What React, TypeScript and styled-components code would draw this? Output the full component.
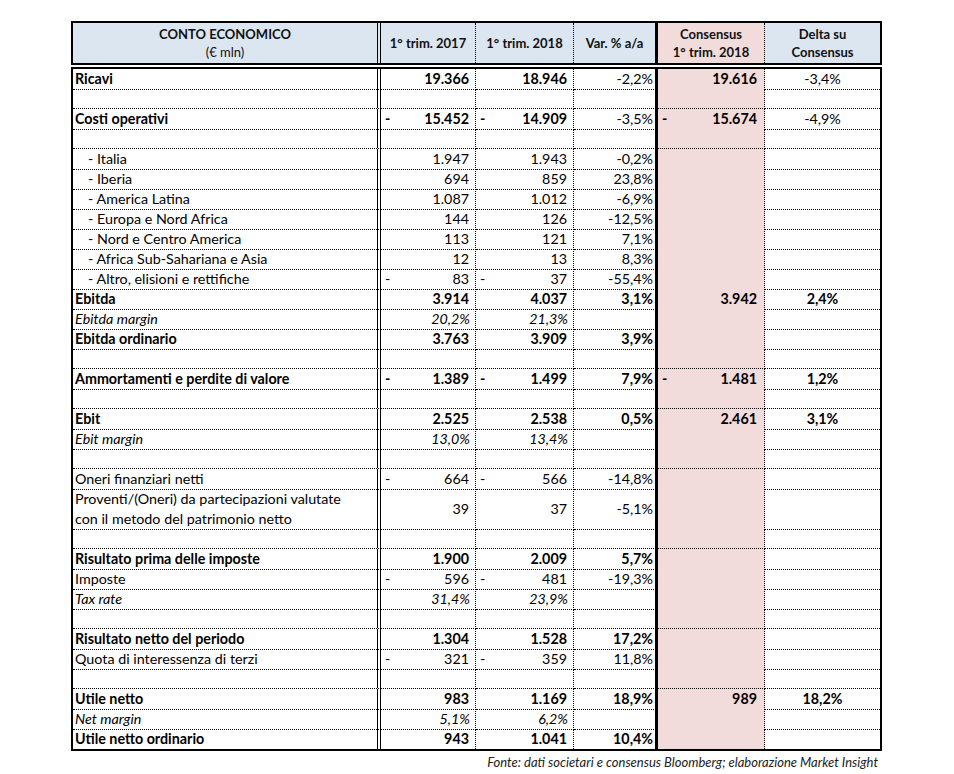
import React from "react";
import styled, { createGlobalStyle, css } from "styled-components";

const GlobalStyle = createGlobalStyle`
  html, body { margin: 0; padding: 0; background: #ffffff; }
  body { font-family: Lato, "Open Sans", Arial, sans-serif; color: #000; }
`;

const COLS = "308px 95px 98px 84px 107px 115px";
const BLUE = "#dce6f1";
const PINK = "#f2dcdb";

type Kind = "bold" | "italic" | "regular" | "indent" | "empty";

interface RowData {
  label?: string[];
  kind: Kind;
  a?: string;
  b?: string;
  v?: string;
  c?: string;
  d?: string;
  vBold?: boolean;
  h?: number;
}

const rows: RowData[] = [
  { label: ["Ricavi"], kind: "bold", a: "19.366", b: "18.946", v: "-2,2%", c: "19.616", d: "-3,4%", vBold: false },
  { kind: "empty" },
  { label: ["Costi operativi"], kind: "bold", a: "-15.452", b: "-14.909", v: "-3,5%", c: "-15.674", d: "-4,9%", vBold: false },
  { kind: "empty" },
  { label: ["- Italia"], kind: "indent", a: "1.947", b: "1.943", v: "-0,2%" },
  { label: ["- Iberia"], kind: "indent", a: "694", b: "859", v: "23,8%" },
  { label: ["- America Latina"], kind: "indent", a: "1.087", b: "1.012", v: "-6,9%" },
  { label: ["- Europa e Nord Africa"], kind: "indent", a: "144", b: "126", v: "-12,5%" },
  { label: ["- Nord e Centro America"], kind: "indent", a: "113", b: "121", v: "7,1%" },
  { label: ["- Africa Sub-Sahariana e Asia"], kind: "indent", a: "12", b: "13", v: "8,3%" },
  { label: ["- Altro, elisioni e rettifiche"], kind: "indent", a: "-83", b: "-37", v: "-55,4%" },
  { label: ["Ebitda"], kind: "bold", a: "3.914", b: "4.037", v: "3,1%", c: "3.942", d: "2,4%" },
  { label: ["Ebitda margin"], kind: "italic", a: "20,2%", b: "21,3%" },
  { label: ["Ebitda ordinario"], kind: "bold", a: "3.763", b: "3.909", v: "3,9%" },
  { kind: "empty" },
  { label: ["Ammortamenti e perdite di valore"], kind: "bold", a: "-1.389", b: "-1.499", v: "7,9%", c: "-1.481", d: "1,2%" },
  { kind: "empty" },
  { label: ["Ebit"], kind: "bold", a: "2.525", b: "2.538", v: "0,5%", c: "2.461", d: "3,1%" },
  { label: ["Ebit margin"], kind: "italic", a: "13,0%", b: "13,4%" },
  { kind: "empty" },
  { label: ["Oneri finanziari netti"], kind: "regular", a: "-664", b: "-566", v: "-14,8%" },
  {
    label: ["Proventi/(Oneri) da partecipazioni valutate", "con il metodo del patrimonio netto"],
    kind: "regular",
    a: "39",
    b: "37",
    v: "-5,1%",
    h: 40,
  },
  { kind: "empty" },
  { label: ["Risultato prima delle imposte"], kind: "bold", a: "1.900", b: "2.009", v: "5,7%" },
  { label: ["Imposte"], kind: "regular", a: "-596", b: "-481", v: "-19,3%" },
  { label: ["Tax rate"], kind: "italic", a: "31,4%", b: "23,9%" },
  { kind: "empty" },
  { label: ["Risultato netto del periodo"], kind: "bold", a: "1.304", b: "1.528", v: "17,2%" },
  { label: ["Quota di interessenza di terzi"], kind: "regular", a: "-321", b: "-359", v: "11,8%" },
  { kind: "empty" },
  { label: ["Utile netto"], kind: "bold", a: "983", b: "1.169", v: "18,9%", c: "989", d: "18,2%" },
  { label: ["Net margin"], kind: "italic", a: "5,1%", b: "6,2%" },
  { label: ["Utile netto ordinario"], kind: "bold", a: "943", b: "1.041", v: "10,4%" },
];

const Page = styled.div`
  padding: 21px 0 0 71px;
`;

const Sheet = styled.div`
  width: 811px;
`;

const HeaderBox = styled.div`
  display: grid;
  grid-template-columns: ${COLS};
  height: 44px;
  box-sizing: border-box;
  border: 2px solid #000;
  background: ${BLUE};
`;

const sepByCol = (col: number) => {
  switch (col) {
    case 0:
      return "border-right: 4px double #000;";
    case 1:
    case 2:
    case 4:
      return "border-right: 1px dotted #000;";
    case 3:
      return "border-right: 3px solid #000;";
    default:
      return "border-right: none;";
  }
};

const HeadCell = styled.div<{ $col: number }>`
  box-sizing: border-box;
  display: flex;
  flex-direction: column;
  align-items: center;
  justify-content: center;
  text-align: center;
  font-size: 13px;
  font-weight: 700;
  line-height: 18px;
  color: #111;
  ${(p) => sepByCol(p.$col)}
  background: ${(p) => (p.$col === 4 ? PINK : "transparent")};
`;

const HeadSub = styled.span`
  font-weight: 400;
`;

const BodyBox = styled.div`
  margin-top: 2px;
  border: 2px solid #000;
`;

const RowGrid = styled.div<{ $h: number }>`
  display: grid;
  grid-template-columns: ${COLS};
  height: ${(p) => p.$h}px;
`;

const cellBase = css<{ $last: boolean }>`
  box-sizing: border-box;
  display: flex;
  align-items: center;
  font-size: 14.3px;
  line-height: 20px;
  white-space: nowrap;
  border-bottom: ${(p) => (p.$last ? "none" : "1px dotted #000")};
`;

const LabelCell = styled.div<{ $last: boolean; $kind: Kind }>`
  ${cellBase}
  ${sepByCol(0)}
  flex-direction: column;
  align-items: flex-start;
  justify-content: center;
  padding-left: ${(p) => (p.$kind === "indent" ? "15px" : "2px")};
  font-weight: ${(p) => (p.$kind === "bold" ? 700 : 400)};
  font-style: ${(p) => (p.$kind === "italic" ? "italic" : "normal")};
`;

const AcctCell = styled.div<{ $last: boolean; $col: number; $bold: boolean; $italic: boolean; $tint?: boolean }>`
  ${cellBase}
  ${(p) => sepByCol(p.$col)}
  justify-content: space-between;
  padding: 0 ${(p) => (p.$italic ? "5px" : p.$col === 4 ? "7px" : "6px")} 0 4px;
  font-weight: ${(p) => (p.$bold ? 700 : 400)};
  font-style: ${(p) => (p.$italic ? "italic" : "normal")};
  background: ${(p) => (p.$tint ? PINK : "transparent")};
`;

const Dash = styled.span``;
const Amount = styled.span`
  margin-left: auto;
`;

const VarCell = styled.div<{ $last: boolean; $bold: boolean }>`
  ${cellBase}
  ${sepByCol(3)}
  justify-content: flex-end;
  padding-right: 2px;
  font-weight: ${(p) => (p.$bold ? 700 : 400)};
`;

const DeltaCell = styled.div<{ $last: boolean; $bold: boolean }>`
  ${cellBase}
  ${sepByCol(5)}
  justify-content: center;
  font-weight: ${(p) => (p.$bold ? 700 : 400)};
`;

const Source = styled.p`
  margin: 3px 0 0;
  padding-right: 4px;
  text-align: right;
  font-size: 13px;
  line-height: 16px;
  font-style: italic;
  color: #222;
`;

function Acct({
  value,
  col,
  last,
  bold,
  italic,
  tint,
}: {
  value?: string;
  col: number;
  last: boolean;
  bold: boolean;
  italic: boolean;
  tint?: boolean;
}) {
  const neg = !!value && value.startsWith("-");
  const text = value ? (neg ? value.slice(1) : value) : "";
  return (
    <AcctCell $col={col} $last={last} $bold={bold} $italic={italic} $tint={tint}>
      {neg && <Dash>-</Dash>}
      <Amount>{text}</Amount>
    </AcctCell>
  );
}

export default function App() {
  return (
    <>
      <GlobalStyle />
      <Page>
        <Sheet>
          <HeaderBox>
            <HeadCell $col={0}>
              <span>CONTO ECONOMICO</span>
              <HeadSub>(€ mln)</HeadSub>
            </HeadCell>
            <HeadCell $col={1}>1° trim. 2017</HeadCell>
            <HeadCell $col={2}>1° trim. 2018</HeadCell>
            <HeadCell $col={3}>Var. % a/a</HeadCell>
            <HeadCell $col={4}>
              <span>Consensus</span>
              <span>1° trim. 2018</span>
            </HeadCell>
            <HeadCell $col={5}>
              <span>Delta su</span>
              <span>Consensus</span>
            </HeadCell>
          </HeaderBox>
          <BodyBox>
            {rows.map((r, i) => {
              const last = i === rows.length - 1;
              const bold = r.kind === "bold";
              const italic = r.kind === "italic";
              const vBold = r.vBold === undefined ? bold : r.vBold;
              return (
                <RowGrid key={i} $h={r.h ?? 20}>
                  <LabelCell $last={last} $kind={r.kind}>
                    {(r.label ?? []).map((l, j) => (
                      <span key={j}>{l}</span>
                    ))}
                  </LabelCell>
                  <Acct value={r.a} col={1} last={last} bold={bold} italic={italic} />
                  <Acct value={r.b} col={2} last={last} bold={bold} italic={italic} />
                  <VarCell $last={last} $bold={vBold}>
                    {r.v ?? ""}
                  </VarCell>
                  <Acct value={r.c} col={4} last={last} bold={bold} italic={italic} tint />
                  <DeltaCell $last={last} $bold={vBold}>
                    {r.d ?? ""}
                  </DeltaCell>
                </RowGrid>
              );
            })}
          </BodyBox>
          <Source>Fonte: dati societari e consensus Bloomberg; elaborazione Market Insight</Source>
        </Sheet>
      </Page>
    </>
  );
}
